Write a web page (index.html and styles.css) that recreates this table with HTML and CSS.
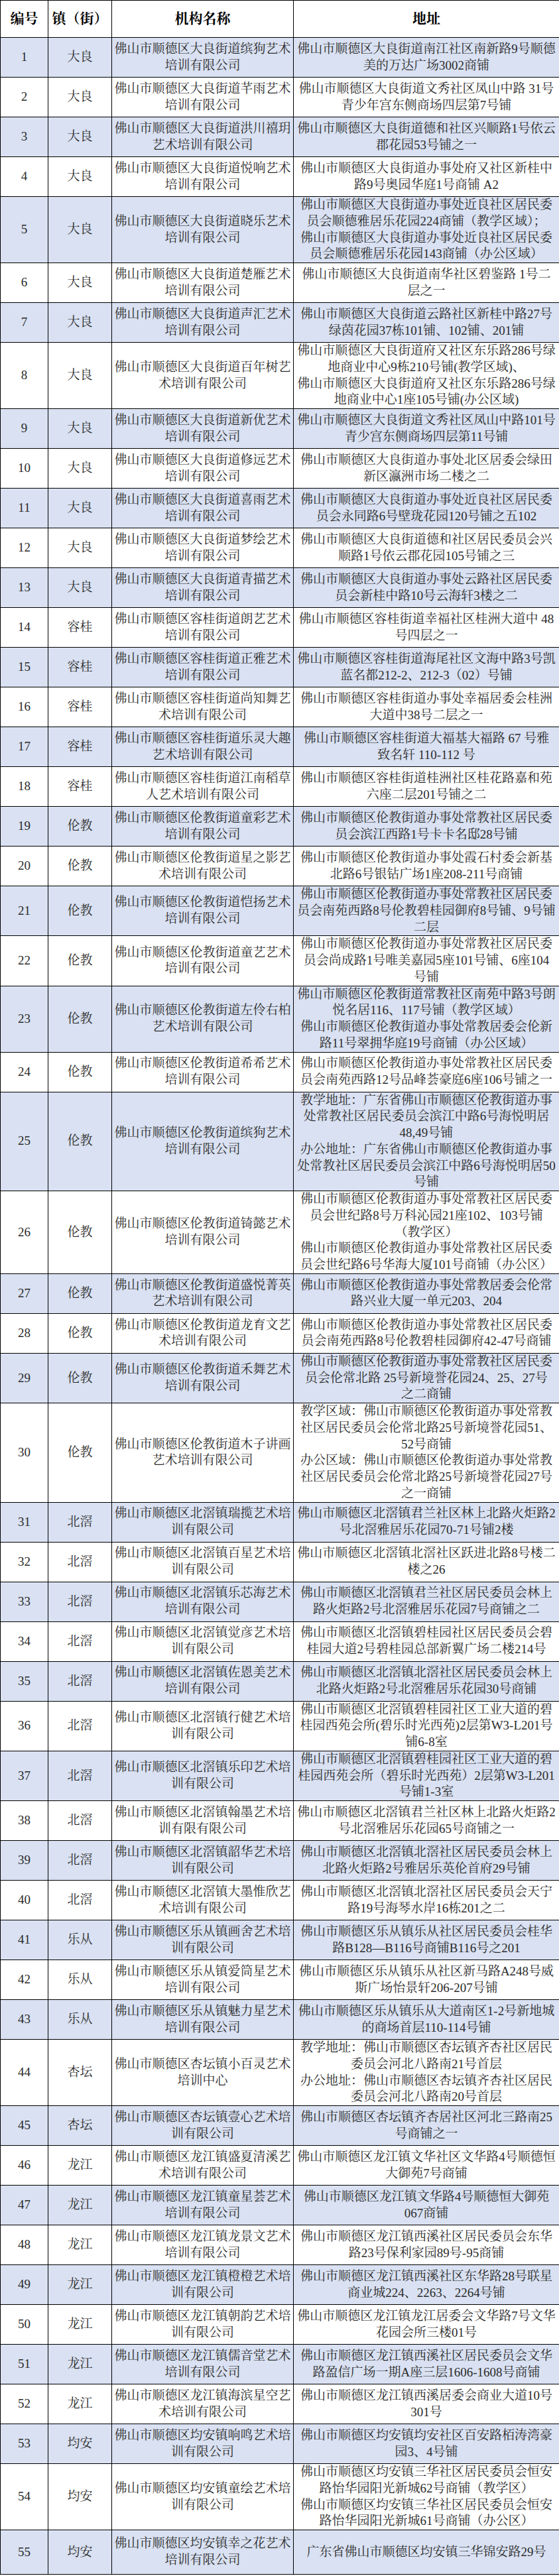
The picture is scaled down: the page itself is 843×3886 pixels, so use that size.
FILE: index.html
```html
<!DOCTYPE html>
<html lang="zh-CN">
<head>
<meta charset="utf-8">
<title>艺术培训机构名单</title>
<link rel="stylesheet" href="styles.css">
</head>
<body>
<table class="list">
<colgroup><col class="w-no"><col class="w-town"><col class="w-name"><col class="w-addr"></colgroup>
<thead>
<tr class="head"><th>编号</th><th>镇（街）</th><th>机构名称</th><th>地址</th></tr>
</thead>
<tbody>
<tr class="alt"><td>1</td><td>大良</td><td>佛山市顺德区大良街道缤狗艺术<br>培训有限公司</td><td>佛山市顺德区大良街道南江社区南新路9号顺德<br>美的万达广场3002商铺</td></tr>
<tr><td>2</td><td>大良</td><td>佛山市顺德区大良街道芊雨艺术<br>培训有限公司</td><td>佛山市顺德区大良街道文秀社区凤山中路 31号<br>青少年宫东侧商场四层第7号铺</td></tr>
<tr class="alt"><td>3</td><td>大良</td><td>佛山市顺德区大良街道洪川禧玥<br>艺术培训有限公司</td><td>佛山市顺德区大良街道德和社区兴顺路1号依云<br>郡花园53号铺之一</td></tr>
<tr><td>4</td><td>大良</td><td>佛山市顺德区大良街道悦响艺术<br>培训有限公司</td><td>佛山市顺德区大良街道办事处府又社区新桂中<br>路9号奥园华庭1号商铺 A2</td></tr>
<tr class="alt"><td>5</td><td>大良</td><td>佛山市顺德区大良街道晓乐艺术<br>培训有限公司</td><td>佛山市顺德区大良街道办事处近良社区居民委<br>员会顺德雅居乐花园224商铺（教学区域）；<br>佛山市顺德区大良街道办事处近良社区居民委<br>员会顺德雅居乐花园143商铺（办公区域）</td></tr>
<tr><td>6</td><td>大良</td><td>佛山市顺德区大良街道楚雁艺术<br>培训有限公司</td><td>佛山市顺德区大良街道南华社区碧鉴路 1号二<br>层之一</td></tr>
<tr class="alt"><td>7</td><td>大良</td><td>佛山市顺德区大良街道声汇艺术<br>培训有限公司</td><td>佛山市顺德区大良街道云路社区新桂中路27号<br>绿茵花园37栋101铺、102铺、201铺</td></tr>
<tr><td>8</td><td>大良</td><td>佛山市顺德区大良街道百年树艺<br>术培训有限公司</td><td>佛山市顺德区大良街道府又社区东乐路286号绿<br>地商业中心9栋210号铺(教学区域)、<br>佛山市顺德区大良街道府又社区东乐路286号绿<br>地商业中心1座105号铺(办公区域)</td></tr>
<tr class="alt"><td>9</td><td>大良</td><td>佛山市顺德区大良街道新优艺术<br>培训有限公司</td><td>佛山市顺德区大良街道文秀社区凤山中路101号<br>青少宫东侧商场四层第11号铺</td></tr>
<tr><td>10</td><td>大良</td><td>佛山市顺德区大良街道修远艺术<br>培训有限公司</td><td>佛山市顺德区大良街道办事处北区居委会绿田<br>新区瀛洲市场二楼之二</td></tr>
<tr class="alt"><td>11</td><td>大良</td><td>佛山市顺德区大良街道喜雨艺术<br>培训有限公司</td><td>佛山市顺德区大良街道办事处近良社区居民委<br>员会永同路6号壁珑花园120号铺之五102</td></tr>
<tr><td>12</td><td>大良</td><td>佛山市顺德区大良街道梦绘艺术<br>培训有限公司</td><td>佛山市顺德区大良街道德和社区居民委员会兴<br>顺路1号依云郡花园105号铺之三</td></tr>
<tr class="alt"><td>13</td><td>大良</td><td>佛山市顺德区大良街道青描艺术<br>培训有限公司</td><td>佛山市顺德区大良街道办事处云路社区居民委<br>员会新桂中路10号云海轩3楼之二</td></tr>
<tr><td>14</td><td>容桂</td><td>佛山市顺德区容桂街道朗艺艺术<br>培训有限公司</td><td>佛山市顺德区容桂街道幸福社区桂洲大道中 48<br>号四层之一</td></tr>
<tr class="alt"><td>15</td><td>容桂</td><td>佛山市顺德区容桂街道正雅艺术<br>培训有限公司</td><td>佛山市顺德区容桂街道海尾社区文海中路3号凯<br>蓝名都212-2、212-3（02）号铺</td></tr>
<tr><td>16</td><td>容桂</td><td>佛山市顺德区容桂街道尚知舞艺<br>术培训有限公司</td><td>佛山市顺德区容桂街道办事处幸福居委会桂洲<br>大道中38号二层之一</td></tr>
<tr class="alt"><td>17</td><td>容桂</td><td>佛山市顺德区容桂街道乐灵大趣<br>艺术培训有限公司</td><td>佛山市顺德区容桂街道大福基大福路 67 号雅<br>致名轩 110-112 号</td></tr>
<tr><td>18</td><td>容桂</td><td>佛山市顺德区容桂街道江南稻草<br>人艺术培训有限公司</td><td>佛山市顺德区容桂街道桂洲社区桂花路嘉和苑<br>六座二层201号铺之二</td></tr>
<tr class="alt"><td>19</td><td>伦教</td><td>佛山市顺德区伦教街道童彩艺术<br>培训有限公司</td><td>佛山市顺德区伦教街道办事处常教社区居民委<br>员会滨江西路1号卡卡名邸28号铺</td></tr>
<tr><td>20</td><td>伦教</td><td>佛山市顺德区伦教街道星之影艺<br>术培训有限公司</td><td>佛山市顺德区伦教街道办事处霞石村委会新基<br>北路6号银钻广场1座208-211号商铺</td></tr>
<tr class="alt"><td>21</td><td>伦教</td><td>佛山市顺德区伦教街道恺扬艺术<br>培训有限公司</td><td>佛山市顺德区伦教街道办事处常教社区居民委<br>员会南苑西路8号伦教碧桂园御府8号铺、9号铺<br>二层</td></tr>
<tr><td>22</td><td>伦教</td><td>佛山市顺德区伦教街道童艺艺术<br>培训有限公司</td><td>佛山市顺德区伦教街道办事处常教社区居民委<br>员会尚成路1号唯美嘉园5座101号铺、6座104<br>号铺</td></tr>
<tr class="alt"><td>23</td><td>伦教</td><td>佛山市顺德区伦教街道左伶右柏<br>艺术培训有限公司</td><td>佛山市顺德区伦教街道常教社区南苑中路3号朗<br>悦名居116、117号铺（教学区域）<br>佛山市顺德区伦教街道办事处常教居委会伦新<br>路11号翠拥华庭19号商铺（办公区域）</td></tr>
<tr><td>24</td><td>伦教</td><td>佛山市顺德区伦教街道希希艺术<br>培训有限公司</td><td>佛山市顺德区伦教街道办事处常教社区居民委<br>员会南苑西路12号品峰荟豪庭6座106号铺之一</td></tr>
<tr class="alt"><td>25</td><td>伦教</td><td>佛山市顺德区伦教街道缤狗艺术<br>培训有限公司</td><td>教学地址：广东省佛山市顺德区伦教街道办事<br>处常教社区居民委员会滨江中路6号海悦明居<br>48,49号铺<br>办公地址：广东省佛山市顺德区伦教街道办事<br>处常教社区居民委员会滨江中路6号海悦明居50<br>号铺</td></tr>
<tr><td>26</td><td>伦教</td><td>佛山市顺德区伦教街道锜懿艺术<br>培训有限公司</td><td>佛山市顺德区伦教街道办事处常教社区居民委<br>员会世纪路8号万科沁园21座102、103号铺<br>（教学区）<br>佛山市顺德区伦教街道办事处常教社区居民委<br>员会世纪路6号华海大厦101号商铺（办公区）</td></tr>
<tr class="alt"><td>27</td><td>伦教</td><td>佛山市顺德区伦教街道盛悦菁英<br>艺术培训有限公司</td><td>佛山市顺德区伦教街道办事处常教居委会伦常<br>路兴业大厦一单元203、204</td></tr>
<tr><td>28</td><td>伦教</td><td>佛山市顺德区伦教街道龙育文艺<br>术培训有限公司</td><td>佛山市顺德区伦教街道办事处常教社区居民委<br>员会南苑西路8号伦教碧桂园御府42-47号商铺</td></tr>
<tr class="alt"><td>29</td><td>伦教</td><td>佛山市顺德区伦教街道禾舞艺术<br>培训有限公司</td><td>佛山市顺德区伦教街道办事处常教社区居民委<br>员会伦常北路 25号新境誉花园24、25、27号<br>之二商铺</td></tr>
<tr><td>30</td><td>伦教</td><td>佛山市顺德区伦教街道木子讲画<br>艺术培训有限公司</td><td>教学区域：佛山市顺德区伦教街道办事处常教<br>社区居民委员会伦常北路25号新境誉花园51、<br>52号商铺<br>办公区域：佛山市顺德区伦教街道办事处常教<br>社区居民委员会伦常北路25号新境誉花园27号<br>之一商铺</td></tr>
<tr class="alt"><td>31</td><td>北滘</td><td>佛山市顺德区北滘镇瑞揽艺术培<br>训有限公司</td><td>佛山市顺德区北滘镇君兰社区林上北路火炬路2<br>号北滘雅居乐花园70-71号铺2楼</td></tr>
<tr><td>32</td><td>北滘</td><td>佛山市顺德区北滘镇百星艺术培<br>训有限公司</td><td>佛山市顺德区北滘镇北滘社区跃进北路8号楼二<br>楼之26</td></tr>
<tr class="alt"><td>33</td><td>北滘</td><td>佛山市顺德区北滘镇乐芯海艺术<br>培训有限公司</td><td>佛山市顺德区北滘镇君兰社区居民委员会林上<br>路火炬路2号北滘雅居乐花园7号商铺之二</td></tr>
<tr><td>34</td><td>北滘</td><td>佛山市顺德区北滘镇觉彦艺术培<br>训有限公司</td><td>佛山市顺德区北滘镇碧桂园社区居民委员会碧<br>桂园大道2号碧桂园总部新翼广场二楼214号</td></tr>
<tr class="alt"><td>35</td><td>北滘</td><td>佛山市顺德区北滘镇佐恩美艺术<br>培训有限公司</td><td>佛山市顺德区北滘镇北滘社区居民委员会林上<br>北路火炬路2号北滘雅居乐花园30号商铺</td></tr>
<tr><td>36</td><td>北滘</td><td>佛山市顺德区北滘镇行健艺术培<br>训有限公司</td><td>佛山市顺德区北滘镇碧桂园社区工业大道的碧<br>桂园西苑会所(碧乐时光西苑)2层第W3-L201号<br>铺6-8室</td></tr>
<tr class="alt"><td>37</td><td>北滘</td><td>佛山市顺德区北滘镇乐印艺术培<br>训有限公司</td><td>佛山市顺德区北滘镇碧桂园社区工业大道的碧<br>桂园西苑会所（碧乐时光西苑）2层第W3-L201<br>号铺1-3室</td></tr>
<tr><td>38</td><td>北滘</td><td>佛山市顺德区北滘镇翰墨艺术培<br>训有限有限公司</td><td>佛山市顺德区北滘镇君兰社区林上北路火炬路2<br>号北滘雅居乐花园65号商铺之一</td></tr>
<tr class="alt"><td>39</td><td>北滘</td><td>佛山市顺德区北滘镇韶华艺术培<br>训有限公司</td><td>佛山市顺德区北滘镇北滘社区居民委员会林上<br>北路火炬路2号雅居乐英伦首府29号铺</td></tr>
<tr><td>40</td><td>北滘</td><td>佛山市顺德区北滘镇大墨惟欣艺<br>术培训有限公司</td><td>佛山市顺德区北滘镇北滘社区居民委员会天宁<br>路19号海琴水岸16栋201之二</td></tr>
<tr class="alt"><td>41</td><td>乐从</td><td>佛山市顺德区乐从镇画舍艺术培<br>训有限公司</td><td>佛山市顺德区乐从镇乐从社区居民委员会桂华<br>路B128—B116号商铺B116号之201</td></tr>
<tr><td>42</td><td>乐从</td><td>佛山市顺德区乐从镇爱筒星艺术<br>培训有限公司</td><td>佛山市顺德区乐从镇乐从社区新马路A248号威<br>斯广场怡景轩206-207号铺</td></tr>
<tr class="alt"><td>43</td><td>乐从</td><td>佛山市顺德区乐从镇魅力星艺术<br>培训有限公司</td><td>佛山市顺德区乐从镇乐从大道南区1-2号新地城<br>的商场首层110-114号铺</td></tr>
<tr><td>44</td><td>杏坛</td><td>佛山市顺德区杏坛镇小百灵艺术<br>培训中心</td><td>教学地址：佛山市顺德区杏坛镇齐杏社区居民<br>委员会河北八路南21号首层<br>办公地址：佛山市顺德区杏坛镇齐杏社区居民<br>委员会河北八路南20号首层</td></tr>
<tr class="alt"><td>45</td><td>杏坛</td><td>佛山市顺德区杏坛镇壹心艺术培<br>训有限公司</td><td>佛山市顺德区杏坛镇齐杏居社区河北三路南25<br>号商铺之一</td></tr>
<tr><td>46</td><td>龙江</td><td>佛山市顺德区龙江镇盛夏清溪艺<br>术培训有限公司</td><td>佛山市顺德区龙江镇文华社区文华路4号顺德恒<br>大御苑7号商铺</td></tr>
<tr class="alt"><td>47</td><td>龙江</td><td>佛山市顺德区龙江镇童星荟艺术<br>培训有限公司</td><td>佛山市顺德区龙江镇文华路4号顺德恒大御苑<br>067商铺</td></tr>
<tr><td>48</td><td>龙江</td><td>佛山市顺德区龙江镇龙景文艺术<br>培训有限公司</td><td>佛山市顺德区龙江镇西溪社区居民委员会东华<br>路23号保利家园89号-95商铺</td></tr>
<tr class="alt"><td>49</td><td>龙江</td><td>佛山市顺德区龙江镇橙橙艺术培<br>训有限公司</td><td>佛山市顺德区龙江镇西溪社区东华路28号联星<br>商业城224、2263、2264号铺</td></tr>
<tr><td>50</td><td>龙江</td><td>佛山市顺德区龙江镇朝韵艺术培<br>训有限公司</td><td>佛山市顺德区龙江镇龙江居委会文华路7号文华<br>花园会所三楼01号</td></tr>
<tr class="alt"><td>51</td><td>龙江</td><td>佛山市顺德区龙江镇儒音堂艺术<br>培训有限公司</td><td>佛山市顺德区龙江镇西溪社区居民委员会文华<br>路盈信广场一期A座三层1606-1608号商铺</td></tr>
<tr><td>52</td><td>龙江</td><td>佛山市顺德区龙江镇海滨星空艺<br>术培训有限公司</td><td>佛山市顺德区龙江镇西溪居委会商业大道10号<br>301号</td></tr>
<tr class="alt"><td>53</td><td>均安</td><td>佛山市顺德区均安镇响鸣艺术培<br>训有限公司</td><td>佛山市顺德区均安镇均安社区百安路栢涛湾豪<br>园3、4号铺</td></tr>
<tr><td>54</td><td>均安</td><td>佛山市顺德区均安镇童绘艺术培<br>训有限公司</td><td>佛山市顺德区均安镇三华社区居民委员会恒安<br>路怡华园阳光新城62号商铺（教学区）<br>佛山市顺德区均安镇三华社区居民委员会恒安<br>路怡华园阳光新城61号商铺（办公区）</td></tr>
<tr class="alt last"><td>55</td><td>均安</td><td>佛山市顺德区均安镇幸之花艺术<br>培训有限公司</td><td>广东省佛山市顺德区均安镇三华锦安路29号</td></tr>
</tbody>
</table>
</body>
</html>
```
FILE: styles.css
```css
html, body {
  margin: 0;
  padding: 0;
  background: #ffffff;
}

.list {
  border-collapse: collapse;
  table-layout: fixed;
  width: 843px;
  font-family: "Liberation Serif", "Noto Serif CJK SC", "Noto Sans CJK SC", serif;
  font-size: 19px;
  line-height: 24.75px;
  color: #2b2b2b;
}

.w-no { width: 72px; }
.w-town { width: 96px; }
.w-name { width: 274px; }
.w-addr { width: 401px; }

.list th,
.list td {
  border: 1px solid #000000;
  padding: 0 2px;
  text-align: center;
  vertical-align: middle;
}

.list tr { height: 60px; }

.list tr.head { height: 56px; }

.list th {
  font-size: 21px;
  font-weight: bold;
  color: #000000;
}

.list tr.alt td { background: #d9e1f2; }

.list tr.last { height: 67px; }
```
